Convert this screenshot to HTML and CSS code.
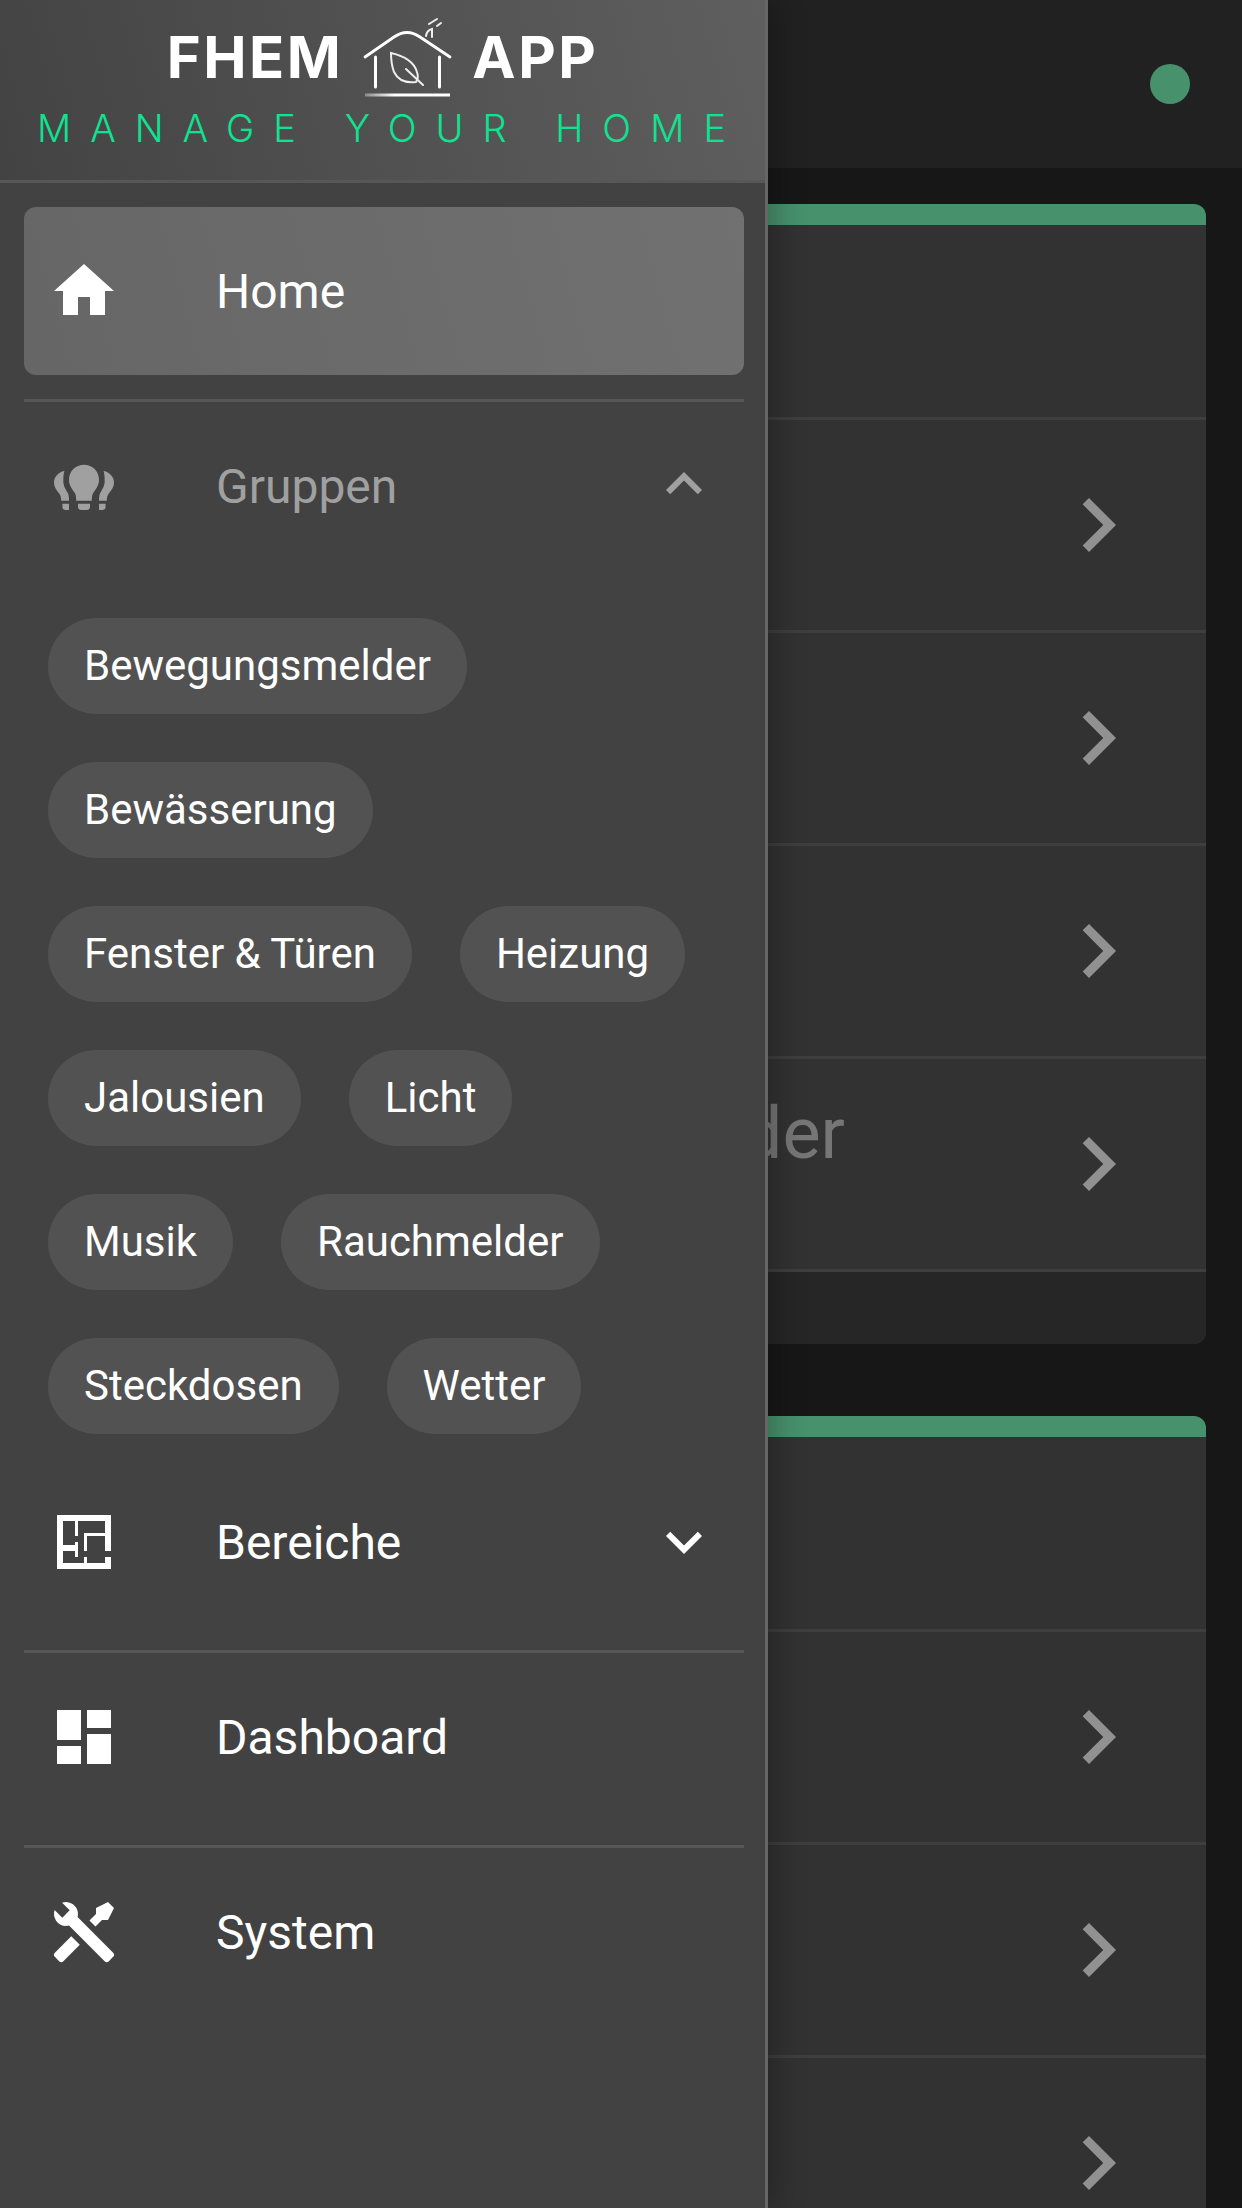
FILE: index.html
```html
<!DOCTYPE html>
<html lang="en">
<head>
    <meta charset="UTF-8">
    <meta name="viewport" content="width=device-width, initial-scale=1.0">
    <title>FHEM App</title>
    <link rel="stylesheet" href="styles.css">
</head>
<body>
    <!-- Page behind the drawer -->
    <div class="page">
        <header class="topbar">
            <span class="status-dot"></span>
        </header>

        <main class="content">
            <section class="card">
                <div class="card-head"></div>
                <div class="card-row">
                    <svg class="row-arrow" viewBox="0 0 24 24"><path d="M8.59,16.58L13.17,12L8.59,7.41L10,6L16,12L10,18L8.59,16.58Z"/></svg>
                </div>
                <div class="card-row">
                    <svg class="row-arrow" viewBox="0 0 24 24"><path d="M8.59,16.58L13.17,12L8.59,7.41L10,6L16,12L10,18L8.59,16.58Z"/></svg>
                </div>
                <div class="card-row">
                    <svg class="row-arrow" viewBox="0 0 24 24"><path d="M8.59,16.58L13.17,12L8.59,7.41L10,6L16,12L10,18L8.59,16.58Z"/></svg>
                </div>
                <div class="card-row">
                    <span class="row-title">Melder</span>
                    <svg class="row-arrow" viewBox="0 0 24 24"><path d="M8.59,16.58L13.17,12L8.59,7.41L10,6L16,12L10,18L8.59,16.58Z"/></svg>
                </div>
                <div class="card-foot"></div>
            </section>

            <section class="card">
                <div class="card-head"></div>
                <div class="card-row">
                    <svg class="row-arrow" viewBox="0 0 24 24"><path d="M8.59,16.58L13.17,12L8.59,7.41L10,6L16,12L10,18L8.59,16.58Z"/></svg>
                </div>
                <div class="card-row">
                    <svg class="row-arrow" viewBox="0 0 24 24"><path d="M8.59,16.58L13.17,12L8.59,7.41L10,6L16,12L10,18L8.59,16.58Z"/></svg>
                </div>
                <div class="card-row">
                    <svg class="row-arrow" viewBox="0 0 24 24"><path d="M8.59,16.58L13.17,12L8.59,7.41L10,6L16,12L10,18L8.59,16.58Z"/></svg>
                </div>
            </section>
        </main>
    </div>

    <!-- Navigation drawer -->
    <nav class="drawer">
        <div class="drawer-head">
            <div class="logo">
                <span class="logo-word">FHEM</span>
                <svg class="logo-house" viewBox="0 0 100 90">
                    <defs>
                        <linearGradient id="floor">
                            <stop offset="0" stop-color="#8a8a8a"/>
                            <stop offset="0.35" stop-color="#fff"/>
                        </linearGradient>
                    </defs>
                    <path class="logo-line" d="M7 45L36 25Q49 16 62 25L92 45"/>
                    <path class="logo-line thick" d="M17.5 45V75M81.5 45V75"/>
                    <path class="logo-line thin" d="M33 41Q55 46 59 60Q61 66 58 70Q42 72 36 60Q33 52 33 41Z"/>
                    <path class="logo-line thin" d="M48 57L65 73"/>
                    <path class="logo-line thin" d="M68 24Q69 18 74 17V25M71 12L79 7M79 14L83 11"/>
                    <rect x="7" y="81.5" width="85" height="3" fill="url(#floor)"/>
                </svg>
                <span class="logo-word">APP</span>
            </div>
            <div class="tagline">MANAGE YOUR HOME</div>
        </div>

        <div class="nav-list">
            <a class="nav-item active">
                <svg class="nav-icon" viewBox="0 0 24 24"><path d="M10 20v-6h4v6h5v-8h3L12 3 2 12h3v8z"/></svg>
                <span>Home</span>
            </a>
            <div class="nav-divider"></div>

            <a class="nav-item muted">
                <svg class="nav-icon" viewBox="0 0 24 24"><path d="M12 4.9C9.2 4.9 7 7.1 7 9.9C7 12 8.2 13.2 9 14.4C9.3 15 9.4 15.8 9.4 16.9H14.6C14.6 15.8 14.7 15 15 14.4C15.8 13.2 17 12 17 9.9C17 7.1 14.8 4.9 12 4.9ZM10 17.9V19C10 19.6 10.5 20 11 20H13C13.5 20 14 19.6 14 19V17.9ZM5.5 6.9C3.4 7.5 2 9 2 10.8C2 12.5 3.1 13.6 3.8 14.6C4.2 15.2 4.4 16 4.4 16.9H7C7 15.6 6.9 14.9 6.5 14.2C5.8 13 5.1 12 5.1 10.2C5.1 8.9 5.2 7.9 5.5 6.9ZM4.8 17.9V19C4.8 19.6 5.3 20 5.8 20H7V17.9ZM18.5 6.9C20.6 7.5 22 9 22 10.8C22 12.5 20.9 13.6 20.2 14.6C19.8 15.2 19.6 16 19.6 16.9H17C17 15.6 17.1 14.9 17.5 14.2C18.2 13 18.9 12 18.9 10.2C18.9 8.9 18.8 7.9 18.5 6.9ZM19.2 17.9V19C19.2 19.6 18.7 20 18.2 20H17V17.9Z"/></svg>
                <span>Gruppen</span>
                <svg class="nav-chevron" viewBox="0 0 24 24"><path d="M7.41,15.41L12,10.83L16.59,15.41L18,14L12,8L6,14L7.41,15.41Z"/></svg>
            </a>
            <div class="chips">
                <span class="chip">Bewegungsmelder</span>
                <span class="chip">Bewässerung</span>
                <span class="chip">Fenster &amp; Türen</span>
                <span class="chip">Heizung</span>
                <span class="chip">Jalousien</span>
                <span class="chip">Licht</span>
                <span class="chip">Musik</span>
                <span class="chip">Rauchmelder</span>
                <span class="chip">Steckdosen</span>
                <span class="chip">Wetter</span>
            </div>

            <a class="nav-item">
                <svg class="nav-icon" viewBox="0 0 24 24"><path d="M10,5V10H9V5H5V13H9V12H10V17H9V15H5V19H12V17H13V19H19V17H21V21H3V3H21V15H19V10H13V15H12V9H19V5H10Z"/></svg>
                <span>Bereiche</span>
                <svg class="nav-chevron" viewBox="0 0 24 24"><path d="M7.41,8.58L12,13.17L16.59,8.58L18,10L12,16L6,10L7.41,8.58Z"/></svg>
            </a>
            <div class="nav-divider"></div>

            <a class="nav-item">
                <svg class="nav-icon" viewBox="0 0 24 24"><path d="M13,3V9H21V3M13,21H21V11H13M3,21H11V15H3M3,13H11V3H3V13Z"/></svg>
                <span>Dashboard</span>
            </a>
            <div class="nav-divider"></div>

            <a class="nav-item">
                <svg class="nav-icon" viewBox="0 0 24 24"><path d="M21.71 20.29L20.29 21.71A1 1 0 0 1 18.88 21.71L7 9.85A3.81 3.81 0 0 1 6 10A4 4 0 0 1 2.22 4.7L4.76 7.24L5.29 6.71L6.71 5.29L7.24 4.76L4.7 2.22A4 4 0 0 1 10 6A3.81 3.81 0 0 1 9.85 7L21.71 18.88A1 1 0 0 1 21.71 20.29M2.29 18.88A1 1 0 0 0 2.29 20.29L3.71 21.71A1 1 0 0 0 5.12 21.71L10.59 16.25L7.76 13.42M20 2L16 4V6L13.83 8.17L15.83 10.17L18 8H20L22 4Z"/></svg>
                <span>System</span>
            </a>
        </div>
    </nav>
</body>
</html>
```

FILE: styles.css
```css
html, body {
    height: 2208px;
    overflow: hidden;
}

body {
    margin: 0;
    position: relative;
    font-family: Roboto, "Liberation Sans", sans-serif;
    background: #171717;
    color: #fff;
}

/* page behind the drawer */
.topbar {
    height: 168px;
    background: #212121;
    display: flex;
    justify-content: flex-end;
    align-items: center;
    padding-right: 52px;
}

.status-dot {
    width: 40px;
    height: 40px;
    border-radius: 50%;
    background: #47916d;
}

.content {
    padding: 36px 36px 0;
}

.card {
    margin-bottom: 72px;
    background: #323232;
    border-top: 21px solid #47916d;
    border-radius: 12px;
}

.card-head {
    height: 192px;
    border-bottom: 3px solid #3e3e3e;
}

.card-row {
    height: 210px;
    border-bottom: 3px solid #3e3e3e;
    display: flex;
    justify-content: flex-end;
    align-items: center;
    padding-right: 54px;
    position: relative;
}

.row-title {
    position: absolute;
    right: 361px;
    top: 33px;
    font-size: 72px;
    line-height: 84px;
    color: #767676;
    white-space: nowrap;
}

.row-arrow {
    width: 108px;
    height: 108px;
    fill: #919191;
}

.card-foot {
    height: 72px;
    background: #262626;
    border-radius: 0 0 12px 12px;
}

/* drawer */
.drawer {
    position: absolute;
    top: 0;
    left: 0;
    bottom: 0;
    width: 768px;
    box-sizing: border-box;
    background: #424242;
    border-right: 3px solid #666;
    box-shadow: 6px 0 30px rgba(0, 0, 0, 0.28);
}

.drawer-head {
    height: 183px;
    box-sizing: border-box;
    padding-top: 12px;
    background: linear-gradient(75deg, #434343, #5f5f5f);
    border-bottom: 3px solid #575757;
}

.logo {
    display: flex;
    justify-content: center;
    align-items: center;
    gap: 17px;
    height: 90px;
}

.logo-word {
    font-family: Inter, sans-serif;
    font-size: 58px;
    font-weight: 700;
    line-height: 90px;
    letter-spacing: 2.5px;
}

.logo-house {
    width: 100px;
    height: 90px;
    margin: 0 -3px 0 -2px;
}

.logo-line {
    fill: none;
    stroke: #fff;
    stroke-width: 2.8;
    stroke-linecap: round;
}

.logo-line.thick {
    stroke-width: 3;
}

.logo-line.thin {
    stroke: #eee;
    stroke-width: 2;
}

.tagline {
    margin-top: 3px;
    padding-left: 17px;
    font-family: Inter, sans-serif;
    font-size: 38px;
    font-weight: 300;
    line-height: 46px;
    letter-spacing: 19px;
    text-align: center;
    white-space: nowrap;
    color: #0fe391;
}

.nav-list {
    padding: 24px 21px 0 24px;
}

.nav-item {
    display: flex;
    align-items: center;
    height: 168px;
    padding: 0 24px;
    font-size: 48px;
    border-radius: 12px;
}

.nav-item.active {
    background: linear-gradient(75deg, #666, #717171);
}

.nav-item.muted {
    color: #a0a0a0;
}

.nav-icon {
    width: 72px;
    height: 72px;
    margin-right: 96px;
    fill: currentColor;
    flex: none;
}

.nav-chevron {
    width: 72px;
    height: 72px;
    margin-left: auto;
    fill: currentColor;
}

.muted .nav-chevron {
    margin-bottom: 4px;
}

.nav-divider {
    height: 3px;
    margin-top: 24px;
    background: #575757;
}

.chips {
    display: flex;
    flex-wrap: wrap;
    gap: 48px;
    padding: 48px 24px 24px;
}

.chip {
    height: 96px;
    padding: 0 36px;
    border-radius: 48px;
    background: #525252;
    font-size: 42px;
    line-height: 96px;
    white-space: nowrap;
}
```
